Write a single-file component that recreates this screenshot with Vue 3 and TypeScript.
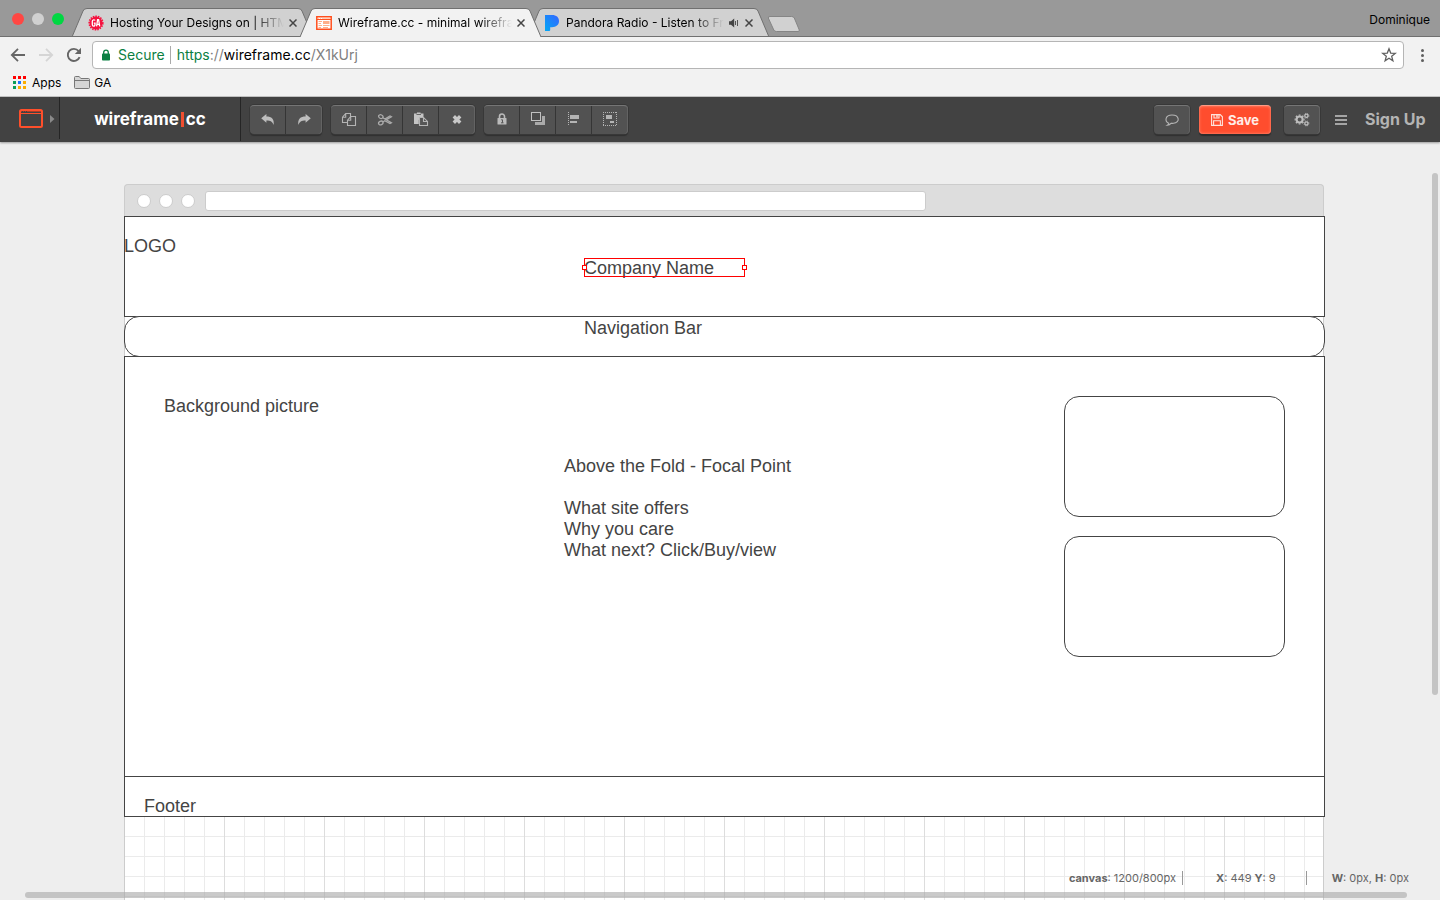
<script setup lang="ts">
import { ref } from 'vue'

interface Tab {
  id: string
  title: string
  audio?: boolean
}

interface Tool {
  id: string
  label: string
}

const tabs: Tab[] = [
  { id: 'ga', title: 'Hosting Your Designs on | HTML' },
  { id: 'wf', title: 'Wireframe.cc - minimal wireframe' },
  { id: 'pandora', title: 'Pandora Radio - Listen to Free', audio: true },
]
const activeTab = ref('wf')

const toolGroups: Tool[][] = [
  [
    { id: 'undo', label: 'Undo' },
    { id: 'redo', label: 'Redo' },
  ],
  [
    { id: 'copy', label: 'Copy' },
    { id: 'cut', label: 'Cut' },
    { id: 'paste', label: 'Paste' },
    { id: 'delete', label: 'Delete' },
  ],
  [
    { id: 'lock', label: 'Lock' },
    { id: 'order', label: 'Order' },
    { id: 'align', label: 'Align' },
    { id: 'group', label: 'Group' },
  ],
]

const appColors = ['#f00', '#f00', '#f00', '#0a9d58', '#1a73ff', '#fbad00', '#0a9d58', '#fbad00', '#fbad00']
const gearTeeth = [0, 45, 90, 135, 180, 225, 270, 315]
</script>

<template>
  <div class="window">
    <header class="tabstrip">
      <div class="lights">
        <button class="light red" aria-label="Close window"></button>
        <button class="light gray" aria-label="Minimize window"></button>
        <button class="light green" aria-label="Zoom window"></button>
      </div>
      <nav class="tabs" aria-label="Tabs">
        <div v-for="t in tabs" :key="t.id" class="tab" :class="{ active: t.id === activeTab }" @click="activeTab = t.id">
          <svg class="tab-shape" viewBox="0 0 241 29" aria-hidden="true">
            <path d="M0 29 L11 3 Q12 .5 15 .5 H226 Q229 .5 230 3 L241 29" stroke="#707070" />
            <path v-if="t.id !== activeTab" d="M0 28.5H241" stroke="#707070" />
          </svg>
          <svg v-if="t.id === 'ga'" class="favicon" viewBox="0 0 16 16">
            <circle cx="8" cy="8" r="6.5" fill="#f5123f" />
            <circle cx="8" cy="8" r="6.8" fill="none" stroke="#f5123f" stroke-width="1.6" stroke-dasharray="1.5 1.1" />
            <path d="M7 5.6C6.6 4.6 4.3 4.2 4.3 6.4V9.5C4.3 11.6 7 11.7 7 9.6V8.2H5.8M8.6 11.4L9.6 4.6H10.6L11.7 11.4M9.2 9.4H11.2" fill="none" stroke="#fff" stroke-width="1.3" />
          </svg>
          <svg v-else-if="t.id === 'wf'" class="favicon" viewBox="0 0 16 16">
            <path d="M.8 1.8H15.2V14.2H.8Z" fill="#fff" stroke="#ff4f1d" stroke-width="1.5" />
            <path d="M1 4.5H15" stroke="#ff4f1d" />
            <path d="M2 3.3H3M4 3.3H5M6 3.3H14" stroke="#ffc3a8" />
            <path d="M2.5 6.5H6M2.5 8.5H5M2.5 10.5H6M2.5 12.5H5M7 10.5H13.5M7 12.5H12" stroke="#ffae88" />
            <path d="M7 6H13.5V9H7Z" fill="#ffae88" />
          </svg>
          <svg v-else class="favicon" viewBox="0 0 16 16">
            <defs>
              <linearGradient id="pandora" x1="0" y1="1" x2="1" y2="0">
                <stop offset="0" stop-color="#00a8f5" />
                <stop offset="1" stop-color="#3664ff" />
              </linearGradient>
            </defs>
            <path d="M1 0H8.2C12.2 0 15 2.3 15 6C15 10 12 12.2 8 12.2H6.2V15Q6.2 16 5.2 16H1Z" fill="url(#pandora)" />
          </svg>
          <span class="tab-title">{{ t.title }}</span>
          <svg v-if="t.audio" class="audio" viewBox="0 0 12 10">
            <path d="M1 3.2H3L6.2 .6V9.4L3 6.8H1Z" fill="#444" />
            <path d="M7.5 3V7M9.5 2V8" stroke="#555" />
          </svg>
          <button class="tab-close" aria-label="Close tab">
            <svg viewBox="0 0 8 8"><path d="M.5 .5L7.5 7.5M7.5 .5L.5 7.5" stroke="#454545" stroke-width="1.5" /></svg>
          </button>
        </div>
        <button class="new-tab" aria-label="New tab">
          <svg viewBox="0 0 34 17">
            <path d="M3 .5H24.5Q26.5 .5 27.3 2L32.3 14Q32.8 15.5 31 15.5H9.5Q7.5 15.5 6.8 14L1.3 2Q1 .5 3 .5Z" fill="#d1d1d1" stroke="#858585" />
          </svg>
        </button>
      </nav>
      <span class="profile">Dominique</span>
    </header>

    <div class="addressbar">
      <button class="nav-btn" aria-label="Back">
        <svg viewBox="0 0 16 16"><path d="M15 8H2M8 1.8L1.8 8L8 14.2" fill="none" stroke="#666" stroke-width="1.8" /></svg>
      </button>
      <button class="nav-btn" aria-label="Forward">
        <svg viewBox="0 0 16 16"><path d="M1 8H14M8 1.8L14.2 8L8 14.2" fill="none" stroke="#d5d5d5" stroke-width="1.8" /></svg>
      </button>
      <button class="nav-btn" aria-label="Reload">
        <svg viewBox="0 0 16 16">
          <path d="M13.6 10.2A6.1 6.1 0 1 1 12.6 4" fill="none" stroke="#666" stroke-width="1.9" />
          <path d="M15 .8V7H8.8Z" fill="#666" />
        </svg>
      </button>
      <div class="omnibox">
        <svg class="padlock" viewBox="0 0 10 12">
          <rect x="1" y="4.5" width="8" height="7" rx=".8" fill="#0b8043" />
          <path d="M2.7 5V3.4A2.3 2.3 0 0 1 7.3 3.4V5" fill="none" stroke="#0b8043" stroke-width="1.3" />
        </svg>
        <span class="secure">Secure</span>
        <span class="url"><span class="scheme">https</span>://<span class="host">wireframe.cc</span>/X1kUrj</span>
        <button class="star" aria-label="Bookmark this page">
          <svg viewBox="0 0 16 16"><path d="M8 1.8L9.7 6.1L14.3 6.4L10.7 9.3L11.9 13.8L8 11.3L4.1 13.8L5.3 9.3L1.7 6.4L6.3 6.1Z" fill="none" stroke="#5f5f5f" stroke-width="1.3" /></svg>
        </button>
      </div>
      <button class="kebab" aria-label="Menu"><i></i><i></i><i></i></button>
    </div>

    <nav class="bookmarks" aria-label="Bookmarks">
      <a href="#" class="bookmark">
        <svg class="apps-icon" viewBox="0 0 13 13">
          <rect v-for="(c, i) in appColors" :key="i" :x="(i % 3) * 5" :y="Math.floor(i / 3) * 5" width="3" height="3" :fill="c" />
        </svg>
        Apps
      </a>
      <a href="#" class="bookmark">
        <svg class="folder" viewBox="0 0 16 13">
          <path d="M.5 11.5V1.5Q.5 .5 1.5 .5H5.2L6.8 2.5H14.5Q15.5 2.5 15.5 3.5V11.5Q15.5 12.5 14.5 12.5H1.5Q.5 12.5 .5 11.5Z" fill="#d5d5d5" stroke="#777" />
          <path d="M1 4.5H15" stroke="#777" />
        </svg>
        GA
      </a>
    </nav>

    <div class="appbar">
      <button class="device" aria-label="Choose template">
        <svg class="device-icon" viewBox="0 0 24 19">
          <rect x="1" y="1" width="22" height="17" rx="1.5" fill="none" stroke="#ff4f2b" stroke-width="2" />
          <path d="M2 4.5H22" stroke="#ff4f2b" />
          <path d="M2 2.5H3M4 2.5H5M6 2.5H7M8 2.5H22" stroke="#a83c28" />
        </svg>
        <svg class="caret" viewBox="0 0 5 8"><path d="M0 0L4.5 4L0 8Z" fill="#8a8a8a" /></svg>
      </button>
      <a href="#" class="brand">wireframe<i class="bar"></i>cc</a>
      <div class="tools">
        <div v-for="(group, gi) in toolGroups" :key="gi" class="group">
          <button v-for="tool in group" :key="tool.id" class="tool" :aria-label="tool.label">
            <svg viewBox="0 0 16 16">
              <path v-if="tool.id === 'undo'" d="M1.2 6.3L6.4 2V4.4C11.5 4.4 14.6 6.8 13.6 13C12.6 9.7 10.6 8.4 6.4 8.4V10.8Z" fill="#bdbdbd" />
              <path v-else-if="tool.id === 'redo'" d="M14.8 6.3L9.6 2V4.4C4.5 4.4 1.4 6.8 2.4 13C3.4 9.7 5.4 8.4 9.6 8.4V10.8Z" fill="#bdbdbd" />
              <g v-else-if="tool.id === 'copy'" fill="none" stroke="#b4b4b4" stroke-width="1.1">
                <path d="M6 10.5H1.5V5.2L4.7 1.5H9.5V5M4.7 1.5V5.2H1.5" />
                <path d="M6.5 13.5V8.2L9.7 4.5H14.5V13.5ZM9.7 4.5V8.2H6.5" />
              </g>
              <g v-else-if="tool.id === 'cut'" fill="none" stroke="#ababab" stroke-width="1.3">
                <ellipse cx="3.8" cy="4.6" rx="2.3" ry="1.8" transform="rotate(25 3.8 4.6)" />
                <ellipse cx="3.8" cy="11" rx="2.3" ry="1.8" transform="rotate(-25 3.8 11)" />
                <path d="M5.8 5.8L14.4 10.8L13 11.6L7.8 8.8L5.8 10M7.8 7L13 4L14.4 4.8L9 7.9" />
              </g>
              <g v-else-if="tool.id === 'paste'">
                <path d="M1 1.5H4V.5H7.5V1.5H10.5V5H8.5L5.8 8V12H1Z" fill="#c4c4c4" />
                <path d="M3.5 2.5H8" stroke="#666" />
                <path d="M6.5 13.5V5.5H10.5L14.5 9.4V13.5ZM10.5 5.5V9.5H14" fill="#555" stroke="#b4b4b4" stroke-width="1.1" />
              </g>
              <path v-else-if="tool.id === 'delete'" d="M4.8 4.3L11.2 10.7M11.2 4.3L4.8 10.7" stroke="#c8c8c8" stroke-width="3.4" />
              <g v-else-if="tool.id === 'lock'">
                <path d="M5.5 7V4.5A2.5 2.5 0 0 1 10.5 4.5V7" fill="none" stroke="#bbb" stroke-width="1.6" />
                <rect x="3.5" y="6" width="9" height="6.5" rx=".6" fill="#bbb" />
                <path d="M7.2 7.8H8.5V10.8M7 10.8H9.5" fill="none" stroke="#555" />
              </g>
              <g v-else-if="tool.id === 'order'">
                <path d="M5 10H12V4H15V13H5Z" fill="#aaa" />
                <rect x="1.5" y="0.5" width="9" height="8" fill="#4d4d4d" stroke="#c0c0c0" />
              </g>
              <g v-else-if="tool.id === 'align'">
                <path d="M2.5 0V14" stroke="#b4b4b4" stroke-dasharray="1 1" />
                <path d="M4 3H13V7H4ZM4 9H11V11H4Z" fill="#b4b4b4" />
              </g>
              <g v-else>
                <path d="M1 .5H15M1 13.5H15M1.5 0V14M14.5 0V14" fill="none" stroke="#b4b4b4" stroke-dasharray="1 1" />
                <path d="M4 3H10V7H4ZM8 9H12V11H8Z" fill="#b4b4b4" />
              </g>
            </svg>
          </button>
        </div>
      </div>
      <div class="actions">
        <button class="tool single" aria-label="Comments">
          <svg viewBox="0 0 16 16"><path d="M4.7 11.2C.5 9.2 1 3 8 3C15.5 3 16.5 10.5 9.5 11.3C8 11.4 7.3 11.2 7.3 11.2C6 12.7 4.6 13.2 3.4 13.2C4.3 12.7 4.7 12 4.7 11.2Z" fill="none" stroke="#b4b4b4" stroke-width="1.1" /></svg>
        </button>
        <button class="save">
          <svg viewBox="0 0 12 12">
            <path d="M.6 .6H9.2L11.4 2.8V11.4H.6ZM3 .6V4H8V.6M2.6 11.4V6.8H9.4V11.4" fill="none" stroke="#ffe3dc" stroke-width="1.1" />
            <path d="M6 1V3.5" stroke="#ffe3dc" stroke-width="1.4" />
          </svg>
          Save
        </button>
        <button class="tool single" aria-label="Settings">
          <svg viewBox="0 0 16 16">
            <g fill="none" stroke="#bdbdbd">
              <circle cx="5.6" cy="7.5" r="3" stroke-width="2" />
              <path v-for="a in gearTeeth" :key="a" d="M5.6 2.5V3.7" stroke-width="1.8" :transform="`rotate(${a} 5.6 7.5)`" />
              <circle cx="12.4" cy="3.8" r="1.6" stroke-width="1.3" />
              <circle cx="12.4" cy="11.4" r="1.6" stroke-width="1.3" />
              <circle cx="12.4" cy="3.8" r="2.5" stroke-width=".8" stroke-dasharray="1 1" />
              <circle cx="12.4" cy="11.4" r="2.5" stroke-width=".8" stroke-dasharray="1 1" />
            </g>
          </svg>
        </button>
        <button class="burger" aria-label="Menu"><i></i><i></i><i></i></button>
        <a href="#" class="signup">Sign Up</a>
      </div>
    </div>

    <main class="workspace">
      <section class="mock">
        <div class="mock-bar">
          <i class="dot"></i><i class="dot"></i><i class="dot"></i>
          <div class="mock-url"></div>
        </div>
        <div class="canvas">
          <div class="shape head"></div>
          <div class="shape navbox"></div>
          <div class="shape hero"></div>
          <div class="shape foot"></div>
          <div class="shape card first"></div>
          <div class="shape card second"></div>
          <div class="label logo">LOGO</div>
          <div class="label company">Company Name<i class="handle west"></i><i class="handle east"></i></div>
          <div class="label navigation">Navigation Bar</div>
          <div class="label background">Background picture</div>
          <div class="label fold">
            <p>Above the Fold - Focal Point</p>
            <p>What site offers<br />Why you care<br />What next? Click/Buy/view</p>
          </div>
          <div class="label footer">Footer</div>
        </div>
      </section>
      <div class="status">
        <span class="size"><b>canvas</b>: 1200/800px</span>
        <span class="cursor"><b>X</b>: 449 <b>Y</b>: 9</span>
        <span><b>W</b>: 0px, <b>H</b>: 0px</span>
      </div>
      <div class="scroll vertical"></div>
      <div class="scroll horizontal"></div>
    </main>
  </div>
</template>

<style>
body {
  margin: 0;
}
</style>

<style scoped>
* {
  box-sizing: border-box;
}
.window {
  display: flex;
  flex-direction: column;
  height: 100vh;
  overflow: hidden;
  font-family: Inter, Roboto, sans-serif;
  font-size: 12px;
  color: #000;
}
button {
  border: 0;
  padding: 0;
  background: none;
  font: inherit;
}
a {
  color: inherit;
  text-decoration: none;
}
svg {
  display: block;
  flex: none;
}

/* Tab strip */
.tabstrip {
  display: flex;
  flex: none;
  height: 37px;
  background: #999;
  border-bottom: 1px solid #707070;
}
.lights {
  display: flex;
  gap: 8px;
  padding: 13px 8px 0 12px;
}
.light {
  width: 12px;
  height: 12px;
  border-radius: 50%;
}
.red { background: #ff4743; }
.gray { background: #d0d0d0; }
.green { background: #00d742; }
.tabs {
  display: flex;
  flex: 1;
  padding-top: 8px;
}
.tab {
  position: relative;
  z-index: 1;
  display: flex;
  align-items: center;
  width: 241px;
  height: 29px;
  margin-right: -13px;
  padding: 0 16px;
}
.tab.active {
  z-index: 2;
}
.tab-shape {
  position: absolute;
  inset: 0;
  width: 241px;
  height: 29px;
  fill: #d1d1d1;
}
.active .tab-shape {
  fill: #f2f2f2;
}
.favicon {
  position: relative;
  width: 16px;
  height: 16px;
  margin-right: 6px;
}
.tab-title {
  position: relative;
  flex: 1;
  overflow: hidden;
  white-space: nowrap;
  -webkit-mask-image: linear-gradient(to left, transparent, #000 32px);
  mask-image: linear-gradient(to left, transparent, #000 32px);
}
.audio {
  position: relative;
  width: 12px;
  height: 10px;
  margin-left: 4px;
}
.tab-close {
  position: relative;
  width: 8px;
  height: 8px;
  margin-left: 5px;
}
.tab-close svg {
  width: 8px;
  height: 8px;
}
.new-tab {
  width: 34px;
  height: 17px;
  margin: 8px 0 0 11px;
}
.new-tab svg {
  width: 34px;
  height: 17px;
}
.profile {
  padding: 12px 10px 0 0;
  line-height: 16px;
}

/* Address bar */
.addressbar {
  display: flex;
  flex: none;
  align-items: center;
  height: 35px;
  padding: 1px 16px 0 10px;
  background: #f2f2f2;
}
.nav-btn {
  width: 16px;
  height: 16px;
  margin-right: 12px;
}
.nav-btn svg {
  width: 16px;
  height: 16px;
}
.nav-btn:nth-child(3) {
  margin-right: 10px;
}
.omnibox {
  display: flex;
  flex: 1;
  align-items: center;
  height: 28px;
  padding: 0 6px 0 8px;
  background: #fff;
  border: 1px solid #b5b5b5;
  border-radius: 4px;
  font-size: 14px;
  line-height: 18px;
}
.padlock {
  width: 10px;
  height: 12px;
  margin-right: 7px;
}
.secure {
  padding-right: 5px;
  margin-right: 6px;
  border-right: 1px solid #aaa;
  color: #0b8043;
}
.url {
  flex: 1;
  color: #808080;
}
.scheme { color: #0b8043; }
.host { color: #000; }
.star svg {
  width: 16px;
  height: 16px;
}
.kebab {
  display: flex;
  flex-direction: column;
  gap: 2px;
  margin-left: 17px;
}
.kebab i {
  width: 3px;
  height: 3px;
  border-radius: 50%;
  background: #5f5f5f;
}

/* Bookmarks */
.bookmarks {
  display: flex;
  flex: none;
  align-items: center;
  gap: 13px;
  height: 25px;
  padding: 0 13px 4px;
  background: #f2f2f2;
  border-bottom: 1px solid #c4c4c4;
}
.bookmark {
  display: flex;
  align-items: center;
}
.apps-icon {
  width: 13px;
  height: 13px;
  margin-right: 6px;
}
.folder {
  width: 16px;
  height: 13px;
  margin-right: 4px;
}

/* Application toolbar */
.appbar {
  position: relative;
  z-index: 3;
  display: flex;
  flex: none;
  align-items: flex-start;
  height: 45px;
  background: #424242;
  box-shadow: 0 1px 2px #999;
}
.device {
  display: flex;
  align-items: center;
  gap: 7px;
  width: 60px;
  height: 42px;
  padding: 1px 0 0 19px;
  border-right: 1px solid #252525;
}
.device-icon {
  width: 24px;
  height: 19px;
}
.caret {
  width: 5px;
  height: 8px;
}
.brand {
  display: flex;
  align-items: center;
  justify-content: center;
  width: 181px;
  height: 44px;
  border-right: 1px solid #252525;
  color: #fff;
  font-size: 17px;
  font-weight: 700;
}
.bar {
  width: 3px;
  height: 15px;
  margin: 0 2px;
  background: #f04e30;
}
.tools {
  display: flex;
  flex: 1;
  gap: 9px;
  padding: 8px 0 0 9px;
}
.group {
  display: flex;
  border-radius: 4px;
  box-shadow: 0 0 0 1px #383838, 0 2px 1px #303030;
}
.tool {
  display: flex;
  align-items: center;
  justify-content: center;
  width: 36px;
  height: 29px;
  background: #525252;
  border-top: 1px solid #757575;
  box-shadow: inset -1px 0 #353535;
}
.tool svg {
  width: 16px;
  height: 16px;
}
.tool:first-child {
  border-radius: 4px 0 0 4px;
}
.tool:last-child {
  border-radius: 0 4px 4px 0;
  box-shadow: inset -1px 0 #636363;
}
.actions {
  display: flex;
  align-items: flex-start;
  padding: 8px 13px 0 0;
}
.actions .single {
  border-radius: 4px;
  box-shadow: inset -1px 0 #636363, 0 0 0 1px #383838, 0 2px 1px #303030;
}
.save {
  display: flex;
  align-items: center;
  justify-content: center;
  gap: 5px;
  width: 72px;
  height: 29px;
  margin: 0 13px 0 9px;
  background: #ff4d2e;
  border-top: 1px solid #ff9a84;
  border-radius: 4px;
  box-shadow: 0 2px 1px #2c2c2c, inset 0 0 3px #ff9a84;
  color: #ffece8;
  font-size: 13px;
  font-weight: 700;
}
.save svg {
  width: 12px;
  height: 12px;
}
.burger {
  display: flex;
  flex-direction: column;
  gap: 2px;
  width: 12px;
  margin: 10px 18px 0 15px;
}
.burger i {
  height: 2px;
  background: #a5a5a5;
}
.signup {
  min-width: 62px;
  color: #b4b4b4;
  font-size: 16px;
  font-weight: 700;
  line-height: 29px;
}

/* Workspace */
.workspace {
  position: relative;
  display: flex;
  flex: 1;
  justify-content: center;
  min-height: 0;
  padding: 42px 0 0 8px;
  overflow: hidden;
  background: #eee;
}
.mock {
  display: flex;
  flex-direction: column;
  width: 1200px;
  flex: none;
}
.mock-bar {
  display: flex;
  flex: none;
  align-items: center;
  gap: 8px;
  height: 32px;
  padding: 0 12px;
  background: #ddd;
  border: 1px solid #ccc;
  border-bottom: 0;
  border-radius: 4px 4px 0 0;
}
.dot {
  width: 14px;
  height: 14px;
  border: 1px solid #ccc;
  border-radius: 50%;
  background: #fff;
}
.mock-url {
  width: 721px;
  height: 20px;
  margin-left: 2px;
  border: 1px solid #ccc;
  border-radius: 3px;
  background: #fff;
}
.canvas {
  position: relative;
  flex: none;
  height: 800px;
  background:
    linear-gradient(to right, #ddd 1px, transparent 1px) 0 0 / 100px 100px,
    linear-gradient(#ddd 1px, transparent 1px) 0 0 / 100px 100px,
    linear-gradient(to right, #ebebeb 1px, transparent 1px) 0 0 / 20px 20px,
    linear-gradient(#ebebeb 1px, transparent 1px) 0 0 / 20px 20px,
    #fff;
  box-shadow: inset 1px 0 #ccc, inset -1px 0 #ccc;
  font-family: "Liberation Sans", Arial, sans-serif;
}
.shape {
  position: absolute;
  left: 0;
  width: 1201px;
  height: 41px;
  border: 1px solid #444;
  background: #fff;
}
.head { top: 0; height: 101px; }
.navbox { top: 100px; border-radius: 15px; }
.hero { top: 140px; height: 421px; }
.foot { top: 560px; }
.card {
  left: 940px;
  width: 221px;
  height: 121px;
  border-radius: 15px;
}
.first { top: 180px; }
.second { top: 320px; }
.label {
  position: absolute;
  color: #444;
  font-size: 18px;
  line-height: 21px;
  white-space: nowrap;
}
.label p {
  margin: 0 0 21px;
}
.logo { top: 20px; left: 0; }
.company {
  top: 42px;
  left: 460px;
  width: 161px;
  height: 19px;
  outline: 1px solid #f00;
  outline-offset: -1px;
}
.handle {
  position: absolute;
  top: 7px;
  width: 5px;
  height: 5px;
  border: 1px solid #f00;
  background: #fff;
}
.west { left: -2px; }
.east { right: -2px; }
.navigation { top: 102px; left: 460px; }
.background { top: 180px; left: 40px; }
.fold { top: 240px; left: 440px; }
.footer { top: 580px; left: 20px; }
.status {
  position: absolute;
  right: 31px;
  bottom: 15px;
  display: flex;
  color: #666;
  font-size: 11px;
  line-height: 14px;
}
.size {
  padding-right: 6px;
  margin-right: 33px;
  border-right: 1px solid #999;
}
.cursor {
  padding-right: 30px;
  margin-right: 25px;
  border-right: 1px solid #999;
}
.scroll {
  position: absolute;
  border-radius: 3px;
  background: rgba(170, 170, 170, .62);
}
.vertical {
  top: 31px;
  right: 2px;
  bottom: 205px;
  width: 6px;
}
.horizontal {
  right: 33px;
  bottom: 2px;
  left: 25px;
  height: 6px;
}
</style>
